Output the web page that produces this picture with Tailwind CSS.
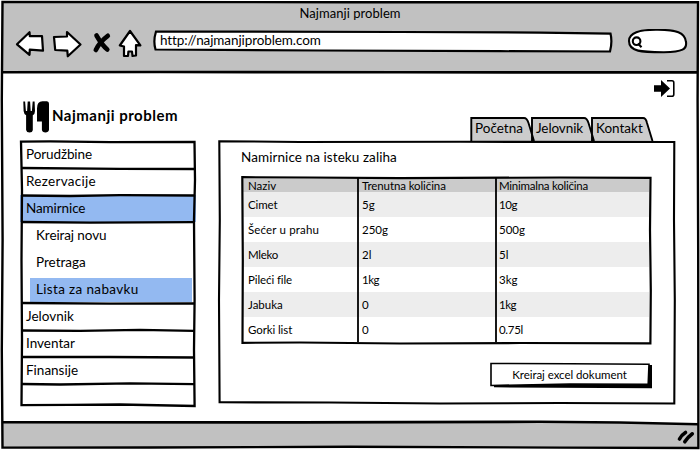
<!DOCTYPE html>
<html lang="sr">
<head>
<meta charset="utf-8">
<title>Najmanji problem</title>
<script src="https://cdn.jsdelivr.net/npm/@tailwindcss/browser@4"></script>
</head>
<body class="bg-white">
<div class="relative flex h-[450px] w-[700px] flex-col overflow-hidden bg-white font-['Lato','Noto_Sans',sans-serif] text-[13.5px] text-black [font-variant-ligatures:none]">

  <header class="flex h-[72px] shrink-0 flex-col bg-[#c1c1c1]">
    <h1 class="h-[29px] text-center text-[13px] leading-[27px] tracking-[0.05px]">Najmanji problem</h1>
    <div class="flex h-[28px] items-start pl-[14px]">
      <svg class="h-[30px] w-[130px] shrink-0" viewBox="14 22 130 30" fill="#fff" stroke="#000" stroke-width="2.2" stroke-linejoin="round">
        <path d="M17 37.3 29.5 25.2 29.8 29.2 42 29 43 43.7 29.8 42.6 29.5 47.8Z"/>
        <path d="M54 30 67 29.5 67 25 80.5 37.5 67.8 49.3 67.3 43.6 55.2 43Z"/>
        <path d="M96.5 28.5C98.5 32 103 39 107.3 42.5M107.8 28.8C103.5 32 98.5 37 95.8 43" fill="none" stroke-width="4.6" stroke-linecap="round"/>
        <path d="M130 24 140.4 38.4 136 38.2 136 48.5 132.5 49 132 44.5 128.4 44.5 128 49 124 49 124 39.5 119.8 38.5Z"/>
      </svg>
      <div class="relative ml-[10px] mt-[2px] h-[21px] w-[459px] shrink-0">
        <svg class="absolute inset-0 h-full w-full overflow-visible" viewBox="154 31 459 21">
          <path d="M156 31.5 400 32 540 32.6 610.5 33.6Q612.5 42 610 51.5L500 51.2 320 50.5 155.5 49.5Q153 41 156 31.5Z" fill="#fff" stroke="#000" stroke-width="2.2"/>
        </svg>
        <span class="relative block pl-[6px] leading-[19px] tracking-[-0.1px]">http://najmanjiproblem.com</span>
      </div>
      <svg class="ml-[14px] h-[26px] w-[62px] shrink-0" viewBox="627 29 62 26" fill="none" stroke="#000" stroke-width="2.1">
        <path d="M629 41C629 33 639 29.5 658 29.8C676 30 685 32 686 42C687 49 683 52 664 52.2C642 52 629 52 629 41Z" fill="#fff"/>
        <circle cx="636.6" cy="41.2" r="3.8"/><path d="M638 43.5 641.5 47.3"/>
      </svg>
    </div>
  </header>

  <main class="flex h-[351px] shrink-0 px-[20px]">
    <aside class="w-[176px] shrink-0">
      <div class="flex h-[69px] items-end">
        <svg class="mb-[7px] ml-[2px] h-[34px] w-[28px]" viewBox="22 100 28 34">
          <path d="M23.3 101.5h1.8l.8 9.5h1.2l.6-9.5h2.4l.6 9.5h1.2l.8-9.5h1.9l.4 9.5q0 3-2.2 4.2v14.8q-.4 2.5-3.3 2.5t-3.4-2.5v-14.8q-2.2-1.2-2.5-4.2ZM42.5 101.3h4.5q2 0 2 2.5v26q-.5 2.7-3.6 2.7t-3.5-2.7V121.5h-4.9v-13q0-7.2 5.5-7.2Z"/>
        </svg>
        <span class="mb-[15px] ml-[2px] text-[15px] font-bold leading-[22px] tracking-[0.5px]">Najmanji problem</span>
      </div>
      <nav class="relative flex h-[265px] flex-col leading-[27px]">
        <a class="h-[27px] pl-[6px] tracking-[-0.1px]">Porudžbine</a>
        <a class="h-[27px] pl-[6px] tracking-[0.3px]">Rezervacije</a>
        <a class="h-[27px] bg-[#93b9f1] pl-[6px] tracking-[-0.1px]">Namirnice</a>
        <a class="h-[27px] pl-[16px] tracking-[-0.1px]">Kreiraj novu</a>
        <a class="h-[27px] pl-[16px]">Pretraga</a>
        <a class="mb-[1px] ml-[10px] mr-[4px] mt-[2px] h-[24px] bg-[#93b9f1] pl-[6px] leading-[23px] tracking-[0.35px]">Lista za nabavku</a>
        <a class="h-[27px] pl-[6px]">Jelovnik</a>
        <a class="h-[27px] pl-[6px]">Inventar</a>
        <a class="h-[27px] pl-[6px]">Finansije</a>
        <svg class="absolute inset-0 h-full w-full overflow-visible" viewBox="20 141 176 265" fill="none" stroke="#000" stroke-width="2.3">
          <path d="M21 141.6 50 141.4 110 142.2 194.5 142 195 180 194 220 194.6 300 194 350 194.6 406 120 404.5 70 404.8 21.5 405.2 22 340 21.5 260 22 190Z"/>
          <path d="M21 168 120 168.8 195 169M21 195.5 70 196 120 195.2 195 195.5M21 222 90 222.6 194 222.2M22 303 110 303.6 194 303.5M22 330.5 80 330.8 140 329.8 194 330.8M22 357 110 357 194 357.5M22 384 60 384.5 130 383.3 194 384.2"/>
        </svg>
      </nav>
    </aside>

    <section class="ml-[22px] w-[458px] shrink-0">
      <div class="relative h-[69px] pt-[44px]">
        <svg class="absolute right-0 top-[6px] h-[20px] w-[24px]" viewBox="652 78 24 20">
          <path d="M654 85.3h7v-5.3l9 8.5-9 8.5v-5.3h-7Z"/>
          <path d="M667 80.8h5q1.8 0 1.8 2v11.4q0 2-1.8 2h-5" fill="none" stroke="#000" stroke-width="1.6"/>
        </svg>
        <div class="relative ml-[252px] flex h-[25px] text-[13.5px] leading-[25px]">
          <svg class="absolute inset-0 h-[25px] w-[184px] overflow-visible" viewBox="470 116 184 25" fill="#ccc" stroke="#000" stroke-width="1.9">
            <path d="M471.3 141V118H524Q527 118 528.5 123L534 141M532 141V118H584Q587 118 588.5 123L594 141M592 141V118H643Q646 118 647 123L652.5 141"/>
          </svg>
          <span class="relative w-[61px] pl-[5px]">Početna</span>
          <span class="relative w-[60px] pl-[5px] tracking-[-0.1px]">Jelovnik</span>
          <span class="relative w-[61px] pl-[5px]">Kontakt</span>
        </div>
      </div>
      <div class="relative flex h-[263px] flex-col pl-[23px] pt-[3px]">
        <svg class="absolute inset-0 h-full w-full overflow-visible" viewBox="218 141 458 263" fill="none" stroke="#000" stroke-width="2.1">
          <path d="M219.3 141.2 300 142 460 141.8 674.3 142 674 220 674.8 300 674.3 403.5 560 403 440 403.5 330 402.5 219.6 402.3 219 300 219.8 220Z"/>
        </svg>
        <h2 class="h-[34px] text-[13.5px] leading-[27px] tracking-[0.08px]">Namirnice na isteku zaliha</h2>
        <div class="relative h-[165px] w-[411px] pl-[2px] text-[11.5px]">
          <div class="grid h-[14px] w-[406px] grid-cols-[115px_137px_1fr] bg-[#cbcbcb] pt-[2px] leading-[12px]"><span class="pl-[5px]">Naziv</span><span class="pl-[4px] tracking-[-0.1px]">Trenutna količina</span><span class="pl-[4px] tracking-[-0.25px]">Minimalna količina</span></div>
          <div class="grid h-[25px] w-[406px] grid-cols-[115px_137px_1fr] bg-[#ededed] leading-[25px]"><span class="pl-[5px] tracking-[-0.1px]">Cimet</span><span class="pl-[4px]">5g</span><span class="pl-[4px] tracking-[-0.4px]">10g</span></div>
          <div class="grid h-[25px] w-[406px] grid-cols-[115px_137px_1fr] leading-[25px]"><span class="pl-[5px] tracking-[0.15px]">Šećer u prahu</span><span class="pl-[4px]">250g</span><span class="pl-[4px]">500g</span></div>
          <div class="grid h-[25px] w-[406px] grid-cols-[115px_137px_1fr] bg-[#ededed] leading-[25px]"><span class="pl-[5px] tracking-[-0.3px]">Mleko</span><span class="pl-[4px]">2l</span><span class="pl-[4px]">5l</span></div>
          <div class="grid h-[25px] w-[406px] grid-cols-[115px_137px_1fr] leading-[25px]"><span class="pl-[5px] tracking-[-0.1px]">Pileći file</span><span class="pl-[4px] tracking-[-0.5px]">1kg</span><span class="pl-[4px]">3kg</span></div>
          <div class="grid h-[25px] w-[406px] grid-cols-[115px_137px_1fr] bg-[#ededed] leading-[25px]"><span class="pl-[5px]">Jabuka</span><span class="pl-[4px]">0</span><span class="pl-[4px] tracking-[-0.5px]">1kg</span></div>
          <div class="grid h-[25px] w-[406px] grid-cols-[115px_137px_1fr] leading-[25px]"><span class="pl-[5px] tracking-[-0.1px]">Gorki list</span><span class="pl-[4px]">0</span><span class="pl-[4px] tracking-[-0.3px]">0.75l</span></div>
          <svg class="absolute inset-0 h-full w-full overflow-visible" viewBox="241 178 411 165" fill="none" stroke="#000" stroke-width="2.2">
            <path d="M242.3 177.2 310 177.5 400 178.2 560 177.5 650.5 177.8 650 230 650.8 290 650.4 343.3 520 343 400 343.5 300 342.5 242.5 342.8 242.8 260Z"/>
            <path d="M358 178V342M496 178V342" stroke-width="1.8"/>
          </svg>
        </div>
        <button class="relative ml-[249px] mt-[20px] h-[23px] w-[159px] text-[11.5px] leading-[21px] tracking-[-0.05px]">
          <svg class="absolute inset-0 h-full w-full overflow-visible" viewBox="490 362 159 23">
            <path d="M494 364H652V387.3L494 386.3Z"/>
            <path d="M491 362.5 570 362.7 649 363.3 648.2 383.2 570 383 491 384.5Z" fill="#fff" stroke="#000" stroke-width="1.6"/>
          </svg>
          <span class="relative">Kreiraj excel dokument</span>
        </button>
      </div>
    </section>
  </main>

  <footer class="flex h-[27px] shrink-0 justify-end bg-[#c1c1c1] pr-[4px] pt-[7px]">
    <svg class="h-[16px] w-[20px]" viewBox="676 430 20 16" fill="none" stroke="#000" stroke-linecap="round" stroke-width="3.6">
      <path d="M685.5 432.5Q681.5 435 679.5 439M692.3 433.8Q688 437 684.8 441.8"/>
    </svg>
  </footer>

  <svg class="pointer-events-none absolute inset-0 h-[450px] w-[700px]" viewBox="0 0 700 450" fill="none" stroke="#000" stroke-width="2.4">
    <path d="M0 0H700V450H0ZM2 2V448H699V2Z" fill="#fff" fill-rule="evenodd" stroke="none"/>
    <path d="M610 421.5 699 421.5V424.5Z" fill="#fff" stroke="none"/>
    <path d="M2.5 2 350 2.2 698 2.2 697.6 100 698.2 250 698.4 448 560 447.6 350 446.8 150 447.5 2.5 447.6 1.8 350 2.6 240 1.8 100Z"/>
    <path d="M2 72.3 160 72 400 72.3 698 72.4M2 422.3 300 422.4 540 421.8 620 422.5 698 424.3" stroke-width="2.6"/>
  </svg>
</div>
</body>
</html>
